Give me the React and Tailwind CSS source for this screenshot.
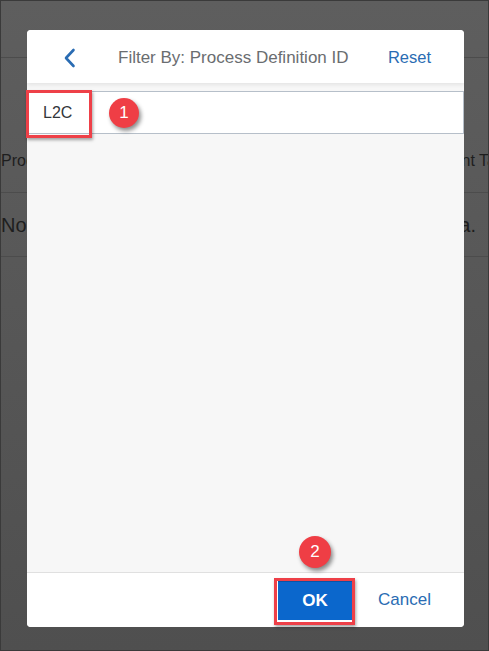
import React from 'react';

const font = { fontFamily: '"Liberation Sans", Arial, sans-serif' };

function Badge({ n, className }) {
  return (
    <div
      className={`absolute flex items-center justify-center rounded-full bg-[#ef3e45] text-white text-[17px] shadow-[2px_3px_4px_rgba(0,0,0,0.45)] ${className}`}
    >
      {n}
    </div>
  );
}

export default function App() {
  return (
    <div
      style={font}
      className="relative w-[489px] h-[651px] overflow-hidden border border-[#3a3a3a] bg-gradient-to-b from-[#5e5e5e] to-[#4f4f4f]"
    >
      {/* Page behind the dialog */}
      <div className="flex flex-col">
        <div className="h-[57px] border-b border-[#4c4c4c]" />
        <div className="h-[72px]" />
        <div className="h-[63px] flex items-center justify-between border-b border-[#4c4c4c] text-[16px] text-[#1e1e1e]">
          <span>Process Definition</span>
          <span className="mr-[-8px]">Current Ta</span>
        </div>
        <div className="h-[64px] flex items-center justify-between border-b border-[#4c4c4c] text-[20px] text-[#1e1e1e]">
          <span>No data</span>
          <span className="mr-[12px]">a.</span>
        </div>
      </div>

      {/* Dialog */}
      <div className="absolute left-[26px] top-[29px] w-[437px] h-[597px] bg-[#f7f7f7] rounded-[4px] overflow-hidden flex flex-col">
        <div className="h-[53px] shrink-0 bg-white flex items-center relative shadow-[0_2px_4px_rgba(0,0,0,0.08)] z-10 pt-[2px]">
          <div className="w-[80px] flex justify-center pl-[4px]">
            <svg width="13" height="20" viewBox="0 0 13 20" fill="none">
              <path d="M10.5 2 L3 10 L10.5 18" stroke="#2a6cb3" strokeWidth="2.6" strokeLinecap="round" strokeLinejoin="round" />
            </svg>
          </div>
          <div className="ml-[11px] text-[17px] text-[#6a6d70]">Filter By: Process Definition ID</div>
          <div className="ml-auto mr-[33px] text-[16.5px] text-[#2a6cb3]">Reset</div>
        </div>
        <div className="h-[8px] shrink-0" />
        <div className="h-[43px] shrink-0 bg-white border border-[#b6bfc9] flex items-center pl-[15px] text-[16px] text-[#32363a]">
          L2C
        </div>
        <div className="flex-1" />
        <div className="h-[55px] shrink-0 bg-white border-t border-[#e0e0e0] flex items-center justify-end gap-[26px] pr-[33px]">
          <div className="w-[74px] h-[40px] bg-[#0b67cc] border-t-2 border-[#0a54a6] flex items-center justify-center text-white font-bold text-[17px]">
            OK
          </div>
          <div className="text-[17px] text-[#2a6cb3]">Cancel</div>
        </div>
      </div>

      {/* Annotations */}
      <div className="absolute left-[25px] top-[89px] w-[66px] h-[48px] border-[3px] border-[#ee4048] shadow-[1px_2px_3px_rgba(0,0,0,0.35)]" />
      <Badge n="1" className="left-[108px] top-[97px] w-[30px] h-[30px]" />
      <div className="absolute left-[273px] top-[577px] w-[81px] h-[47px] border-[3px] border-[#ee4048] shadow-[1px_2px_3px_rgba(0,0,0,0.35)]" />
      <Badge n="2" className="left-[298px] top-[535px] w-[32px] h-[32px]" />
    </div>
  );
}
